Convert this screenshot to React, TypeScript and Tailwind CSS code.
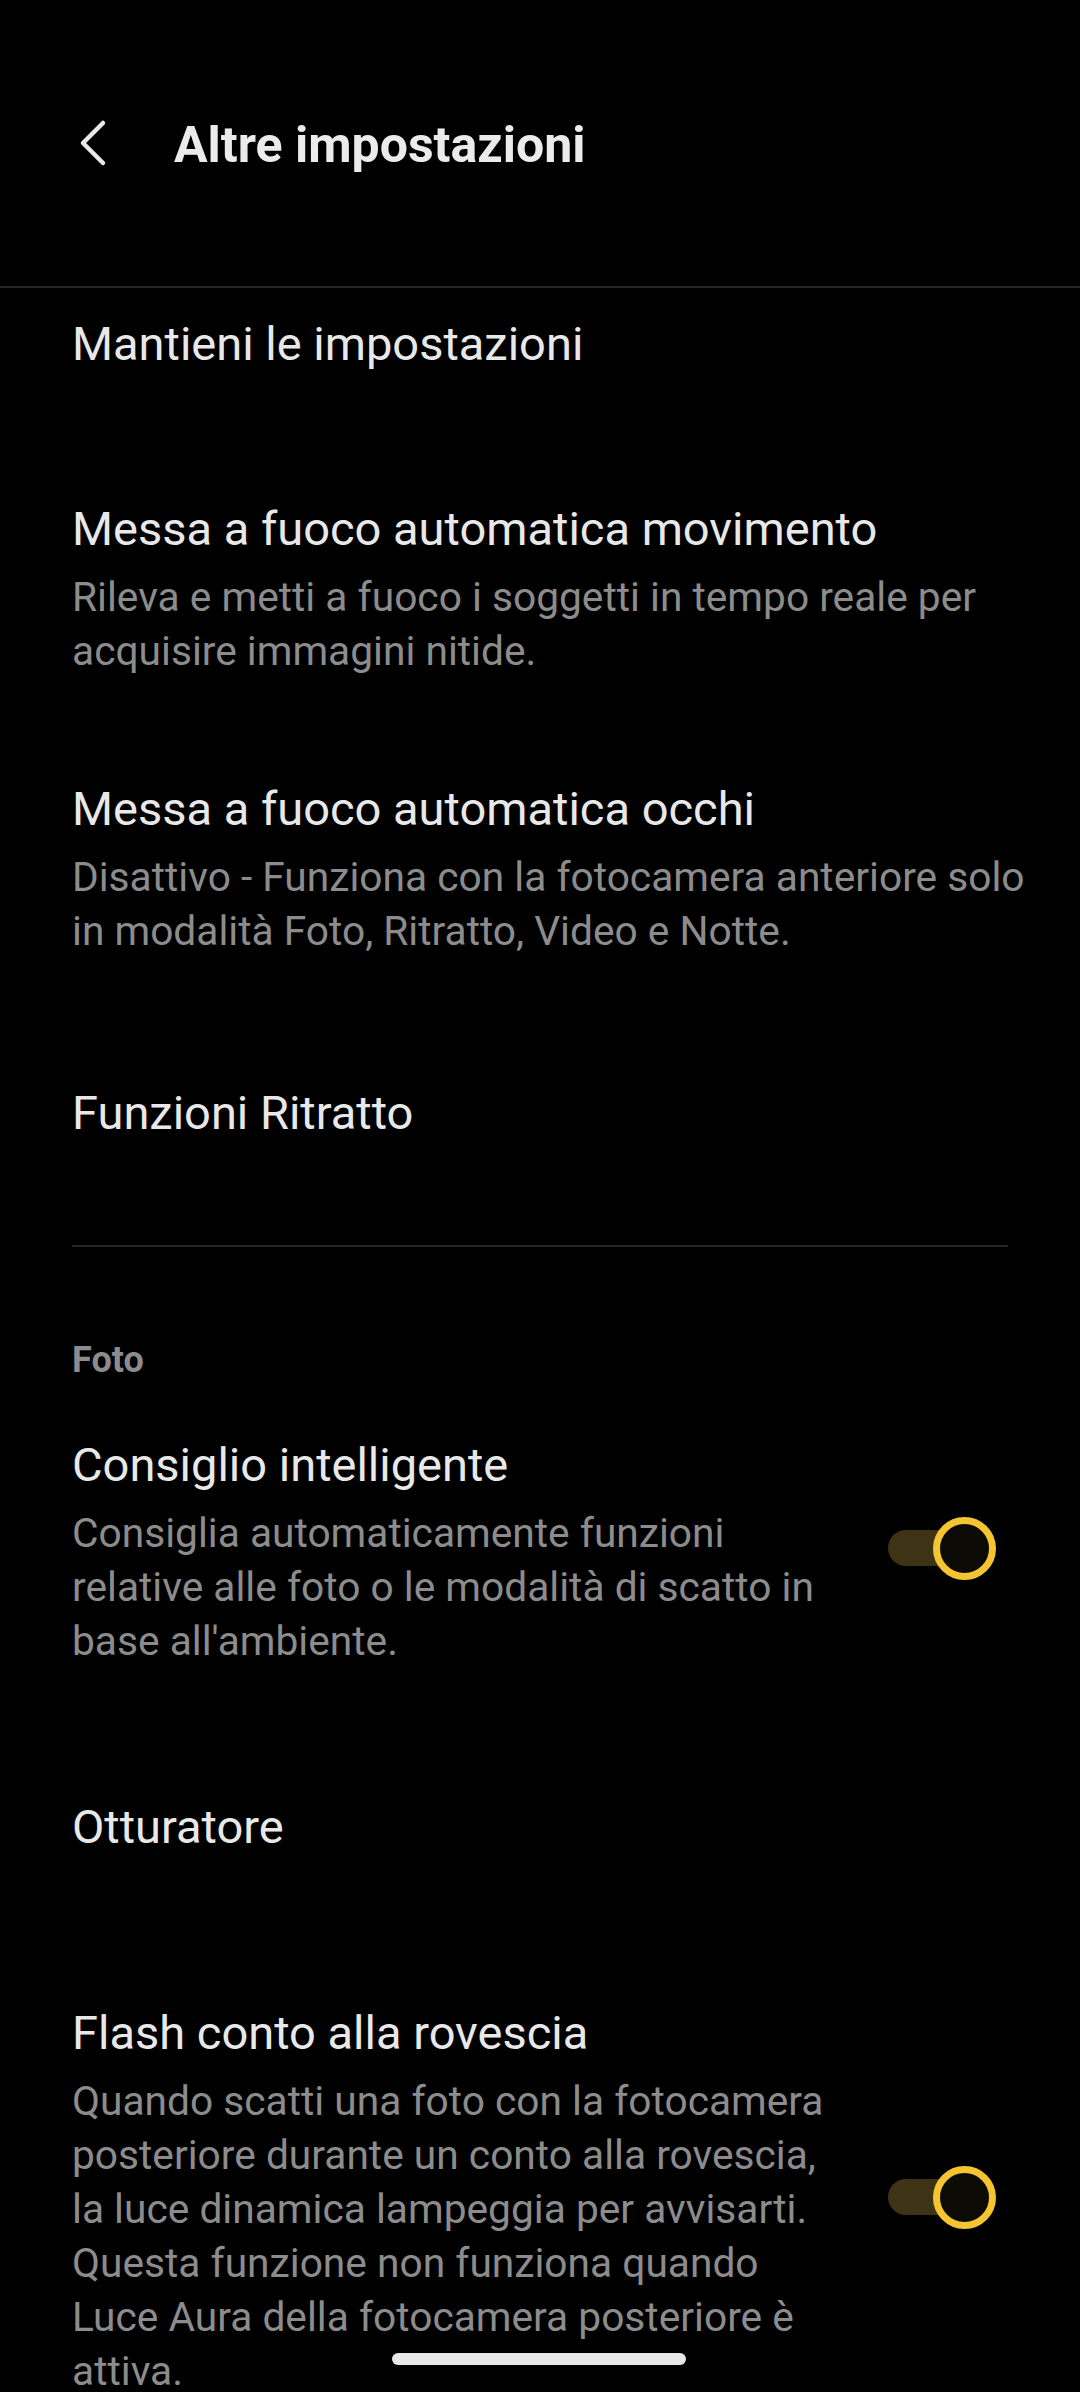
import React from "react";

const font = { fontFamily: "Roboto, 'Noto Sans', sans-serif" };

const Toggle = () => (
    <div className="relative w-[108px] h-[63px] shrink-0 mb-[6px]">
        <div className="absolute left-0 top-[13px] w-[96px] h-[36px] rounded-full bg-[#3e3315]" />
        <div className="absolute right-0 top-0 w-[63px] h-[63px] rounded-full border-[7px] border-[#f4c530] bg-[#0d0b05]" />
    </div>
);

type ItemProps = {
    title: string;
    desc?: string;
    toggle?: boolean;
    className?: string;
};

const Item = ({ title, desc, toggle, className }: ItemProps) => (
    <div className={"flex items-center gap-[24px] pl-[72px] pr-[84px] " + (className ?? "")}>
        <div className="flex-1 min-w-0">
            <div className="text-[47px] leading-[60px] text-[#e8e8e8] whitespace-nowrap">{title}</div>
            {desc && (
                <div className="mt-[11px] text-[40.7px] leading-[54px] text-[#8c8c8c] whitespace-pre">
                    {desc}
                </div>
            )}
        </div>
        {toggle && <Toggle />}
    </div>
);

export default function App() {
    return (
        <div className="relative w-[1080px] h-[2392px] overflow-hidden bg-black" style={font}>
            {/* header */}
            <div className="h-[288px] border-b-2 border-[#262626] flex items-center">
                <div className="ml-[78px] flex items-center">
                    <svg width="32" height="48" viewBox="0 0 32 48" className="-mt-[1px]">
                        <path d="M25 4 L5 24 L25 44" fill="none" stroke="#e8e8e8" strokeWidth="4.5" strokeLinecap="round" strokeLinejoin="round" />
                    </svg>
                </div>
                <h1 className="ml-[64px] mt-[3px] text-[50px] font-bold text-[#ebebeb] leading-[60px]">Altre impostazioni</h1>
            </div>

            <Item className="mt-[26px]" title="Mantieni le impostazioni" />
            <Item
                className="mt-[125px]"
                title="Messa a fuoco automatica movimento"
                desc={"Rileva e metti a fuoco i soggetti in tempo reale per\nacquisire immagini nitide."}
            />
            <Item
                className="mt-[101px]"
                title="Messa a fuoco automatica occhi"
                desc={"Disattivo - Funziona con la fotocamera anteriore solo\nin modalità Foto, Ritratto, Video e Notte."}
            />
            <Item className="mt-[125px]" title="Funzioni Ritratto" />

            <div className="mt-[102px] mx-[72px] h-[2px] bg-[#262626]" />

            <div className="mt-[91px] pl-[72px] text-[36px] leading-[44px] font-bold text-[#8c8c8c]">Foto</div>

            <Item
                className="mt-[53px]"
                title="Consiglio intelligente"
                desc={"Consiglia automaticamente funzioni\nrelative alle foto o le modalità di scatto in\nbase all'ambiente."}
                toggle
            />
            <Item className="mt-[129px]" title="Otturatore" />
            <Item
                className="mt-[146px]"
                title="Flash conto alla rovescia"
                desc={"Quando scatti una foto con la fotocamera\nposteriore durante un conto alla rovescia,\nla luce dinamica lampeggia per avvisarti.\nQuesta funzione non funziona quando\nLuce Aura della fotocamera posteriore è\nattiva."}
                toggle
            />

            {/* gesture bar */}
            <div className="absolute left-[392px] top-[2353px] w-[294px] h-[12px] rounded-full bg-[#e8e8e8]" />
        </div>
    );
}
